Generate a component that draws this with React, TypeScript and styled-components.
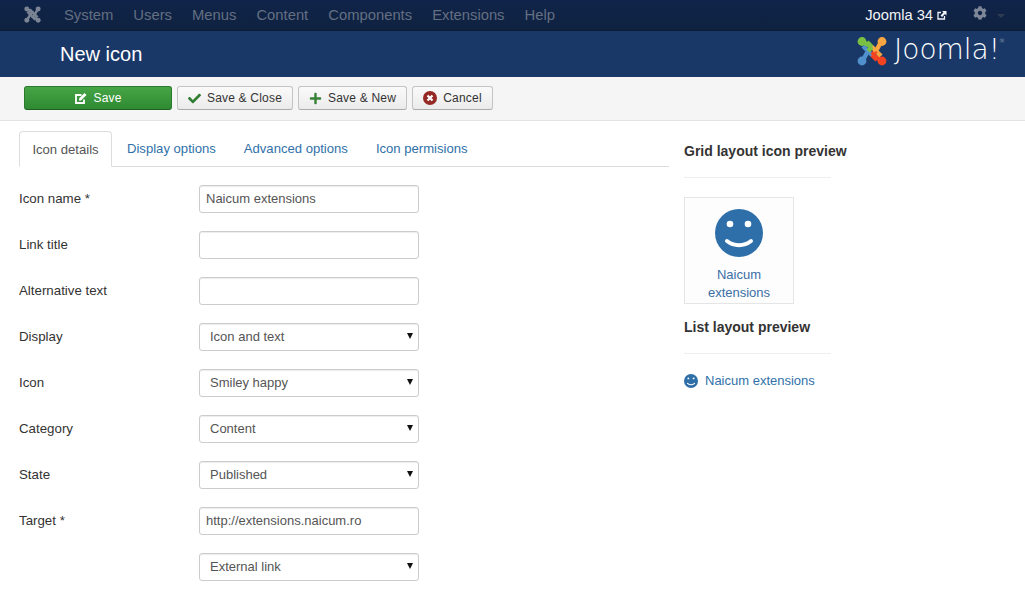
import React from "react";
import styled, { createGlobalStyle } from "styled-components";
import { FaCheck, FaPlus, FaCog } from "react-icons/fa";

const Global = createGlobalStyle`
  html, body { margin: 0; padding: 0; height: 606px; overflow: hidden; background: #fff; }
  body { font-family: "Liberation Sans", Arial, sans-serif; font-size: 14px; color: #333; }
  * { box-sizing: border-box; }
`;

const Page = styled.div`display: flex; flex-direction: column; width: 1025px;`;

const NavBar = styled.nav`
  height: 31px; display: flex; align-items: center; padding: 0 20px 0 24px;
  background: linear-gradient(#10244a, #0f2240); border-bottom: 1px solid #0c1b33;
`;
const Brand = styled.div`display: flex; width: 40px; margin-top: -2px; color: #7a8494;`;
const NavLink = styled.a`font-size: 14.81px; color: #646f82; margin-right: 20px;`;
const NavRight = styled.div`margin-left: auto; display: flex; align-items: center; color: #f2f4f7; font-size: 14.7px;`;
const SiteLink = styled.span`display: flex; align-items: center; gap: 4px; margin-right: 26px;`;
const Caret = styled.span`
  width: 0; height: 0; margin-left: 10px; margin-top: 1px;
  border: 4px solid transparent; border-top: 4px solid #2e3b52; border-bottom: 0;
`;
const GearWrap = styled.span`display: flex; color: #7d8797; margin-top: -4px;`;

const Header = styled.header`
  height: 46px; background: #1a3867; display: flex; align-items: center; justify-content: space-between;
  padding: 0 25px 0 60px;
`;
const Title = styled.h1`margin: 0; font-size: 20px; font-weight: 400; color: #fff; line-height: 1;`;
const Logo = styled.div`display: flex; align-items: center; gap: 7px; margin-top: -6px;`;
const LogoText = styled.span`
  font-family: "DejaVu Sans", sans-serif; font-weight: 200; font-size: 28px; color: #fff; line-height: 1;
  position: relative; top: -1px;
  sup { font-size: 6px; position: absolute; top: 2px; right: -5px; color: #b8c2d2; }
`;

const Toolbar = styled.div`
  height: 44px; display: flex; align-items: flex-start; gap: 5px; padding: 9px 24px 0;
  background: #f5f5f5; border-bottom: 1px solid #e3e3e3;
`;
const Button = styled.button<{ $w: number; $primary?: boolean }>`
  width: ${p => p.$w}px; height: 24px; padding: 0; display: flex; align-items: center; justify-content: center; gap: 6px;
  font: 12px "Liberation Sans", Arial, sans-serif; letter-spacing: 0.2px; border-radius: 3px;
  color: ${p => (p.$primary ? "#fff" : "#333")};
  background: ${p => (p.$primary ? "linear-gradient(#46a546, #2f8a32)" : "linear-gradient(#fafafa, #ebebeb)")};
  border: 1px solid ${p => (p.$primary ? "#2b7a2e" : "#c4c4c4")};
  ${p => (p.$primary ? "border-bottom-color: #1f5f22;" : "border-bottom-color: #aaa;")}
`;

const Content = styled.main`display: flex; padding: 10px 0 0 19px;`;
const Left = styled.div`width: 650px;`;
const Tabs = styled.div`display: flex; height: 36px; border-bottom: 1px solid #ddd;`;
const Tab = styled.a<{ $active?: boolean }>`
  height: 36px; line-height: 35px; text-align: center; width: ${p => (p.$active ? "93px" : "auto")};
  padding: ${p => (p.$active ? "0" : "0 15px")}; margin-right: ${p => (p.$active ? 0 : -2)}px;
  color: ${p => (p.$active ? "#555" : "#3071a9")};
  ${p => p.$active && "background:#fff;border:1px solid #ddd;border-bottom-color:#fff;border-radius:4px 4px 0 0;"}
  font-size: 13.1px;
`;
const Form = styled.div`display: flex; flex-direction: column; gap: 18px; padding-top: 18px;`;
const Row = styled.div`display: flex; align-items: center; height: 28px;`;
const Label = styled.label`width: 180px; font-size: 13.3px; color: #333; position: relative; top: -1px;`;
const Input = styled.input`
  width: 220px; height: 28px; padding: 0 6px 2px; border: 1px solid #ccc; border-radius: 3px; color: #555;
  font: 13px "Liberation Sans", Arial, sans-serif;
  box-shadow: inset 0 1px 1px rgba(0,0,0,.075); outline: none;
`;
const SelectWrap = styled.div`
  position: relative; width: 220px; height: 28px;
  &::after {
    content: ""; position: absolute; right: 6px; top: 10px; width: 0; height: 0;
    border: 3.5px solid transparent; border-top: 6px solid #111; border-bottom: 0;
  }
`;
const Select = styled.select`
  appearance: none; width: 100%; height: 100%; padding: 0 10px 1px; border: 1px solid #ccc; border-radius: 3px;
  background: #fff; color: #555; font: 13px "Liberation Sans", Arial, sans-serif;
  box-shadow: inset 0 1px 1px rgba(0,0,0,.075); outline: none;
`;

const Right = styled.aside`width: 147px; margin-left: 15px; padding-top: 10px;`;
const Heading = styled.h4`margin: 0; font-size: 14px; font-weight: 700; line-height: 20px; white-space: nowrap; color: #333;`;
const Rule = styled.hr`margin: 16px 0 19px; border: 0; border-top: 1px solid #eee;`;
const GridCard = styled.div`
  width: 110px; height: 107px; border: 1px solid #e5e5e5; background: #fdfdfd; display: flex; flex-direction: column; align-items: center;
  padding-top: 11px; margin-bottom: 13px;
`;
const CardLabel = styled.span`margin-top: 9px; font-size: 13px; line-height: 18px; text-align: center; color: #3a6ea5; width: 80px;`;
const ListRow = styled.div`display: flex; align-items: center; gap: 7px; color: #3071a9; font-size: 13px; margin-top: 2px;`;

const Smiley = ({ size }: { size: number }) => (
  <svg width={size} height={size} viewBox="0 0 48 48" aria-hidden>
    <circle cx="24" cy="24" r="24" fill="#2f6fa9" />
    <circle cx="15" cy="15" r="3.3" fill="#fff" />
    <circle cx="33" cy="15" r="3.3" fill="#fff" />
    <path d="M12 32c7 5.6 17 5.6 24 0" stroke="#fff" strokeWidth="4" fill="none" strokeLinecap="round" />
  </svg>
);

const JoomlaMark = ({ size, mono }: { size: number; mono?: boolean }) => {
  const c = mono ? ["#7a8494", "#7a8494", "#7a8494", "#7a8494"] : ["#7ac143", "#f9a541", "#f44321", "#5091cd"];
  return (
    <svg width={size} height={size} viewBox="0 0 30 30" aria-hidden>
      <g fill="none" strokeWidth="4.4" strokeLinejoin="round">
        <path d="M5.500 25L11 15L6 10" stroke={c[3]} />
        <path d="M25 24.500L15 19L20 24" stroke={c[2]} />
        <path d="M24.500 5L19 15L24 20" stroke={c[1]} />
        <path d="M5 5.500L15 11L10 6" stroke={c[0]} />
        <path d="M11 15L15 19" stroke={c[3]} />
        <path d="M15 19L19 15" stroke={c[2]} />
        <path d="M19 15L15 11" stroke={c[1]} />
        <path d="M15 11L11 15" stroke={c[0]} />
      </g>
      <circle cx="5" cy="5.500" r="4.400" fill={c[0]} />
      <circle cx="25" cy="5.500" r="4.400" fill={c[1]} />
      <circle cx="25" cy="25" r="4.400" fill={c[2]} />
      <circle cx="5" cy="25" r="4.400" fill={c[3]} />
    </svg>
  );
};

const EditIcon = () => (
  <svg width="13" height="13" viewBox="0 0 13 13" aria-hidden>
    <path d="M10 7.500V11H2V3h5.500" fill="none" stroke="#fff" strokeWidth="1.800" />
    <path d="M5 8.500V6.500L10.500 1 12.500 3 7 8.500z" fill="#fff" />
  </svg>
);
const OutIcon = () => (
  <svg width="10" height="10" viewBox="0 0 10 10" aria-hidden>
    <path d="M7.500 6v3H1V2.500h3" fill="none" stroke="#f2f4f7" strokeWidth="1.300" />
    <path d="M5 1h4.500v4.500L8 4 5 7 3.500 5.500l3-3z" fill="#f2f4f7" />
  </svg>
);
const CancelIcon = () => (
  <svg width="14" height="14" viewBox="0 0 14 14" aria-hidden>
    <circle cx="7" cy="7" r="7" fill="#942a25" />
    <path d="M4.500 4.500l5 5M9.500 4.500l-5 5" stroke="#fff" strokeWidth="2.200" />
  </svg>
);

const navItems = ["System", "Users", "Menus", "Content", "Components", "Extensions", "Help"];

export default function App() {
  return (
    <Page>
      <Global />
      <NavBar>
        <Brand><JoomlaMark size={17} mono /></Brand>
        {navItems.map(n => <NavLink key={n}>{n}</NavLink>)}
        <NavRight>
          <SiteLink>Joomla 34 <OutIcon /></SiteLink>
          <GearWrap><FaCog size={14} /></GearWrap>
          <Caret />
        </NavRight>
      </NavBar>
      <Header>
        <Title>New icon</Title>
        <Logo>
          <JoomlaMark size={30} />
          <LogoText>Joomla!<sup>®</sup></LogoText>
        </Logo>
      </Header>
      <Toolbar>
        <Button $w={148} $primary><EditIcon /> Save</Button>
        <Button $w={116}><FaCheck size={13} color="#2f7d32" /> Save &amp; Close</Button>
        <Button $w={109}><FaPlus size={13} color="#378137" /> Save &amp; New</Button>
        <Button $w={81}><CancelIcon /> Cancel</Button>
      </Toolbar>
      <Content>
        <Left>
          <Tabs>
            <Tab $active>Icon details</Tab>
            <Tab>Display options</Tab>
            <Tab>Advanced options</Tab>
            <Tab>Icon permisions</Tab>
          </Tabs>
          <Form>
            <Row><Label>Icon name *</Label><Input defaultValue="Naicum extensions" /></Row>
            <Row><Label>Link title</Label><Input /></Row>
            <Row><Label>Alternative text</Label><Input /></Row>
            <Row><Label>Display</Label><SelectWrap><Select defaultValue="Icon and text"><option>Icon and text</option></Select></SelectWrap></Row>
            <Row><Label>Icon</Label><SelectWrap><Select defaultValue="Smiley happy"><option>Smiley happy</option></Select></SelectWrap></Row>
            <Row><Label>Category</Label><SelectWrap><Select defaultValue="Content"><option>Content</option></Select></SelectWrap></Row>
            <Row><Label>State</Label><SelectWrap><Select defaultValue="Published"><option>Published</option></Select></SelectWrap></Row>
            <Row><Label>Target *</Label><Input defaultValue="http://extensions.naicum.ro" /></Row>
            <Row><Label /><SelectWrap><Select defaultValue="External link"><option>External link</option></Select></SelectWrap></Row>
          </Form>
        </Left>
        <Right>
          <Heading>Grid layout icon preview</Heading>
          <Rule />
          <GridCard>
            <Smiley size={48} />
            <CardLabel>Naicum extensions</CardLabel>
          </GridCard>
          <Heading>List layout preview</Heading>
          <Rule />
          <ListRow><Smiley size={14} /> Naicum extensions</ListRow>
        </Right>
      </Content>
    </Page>
  );
}
